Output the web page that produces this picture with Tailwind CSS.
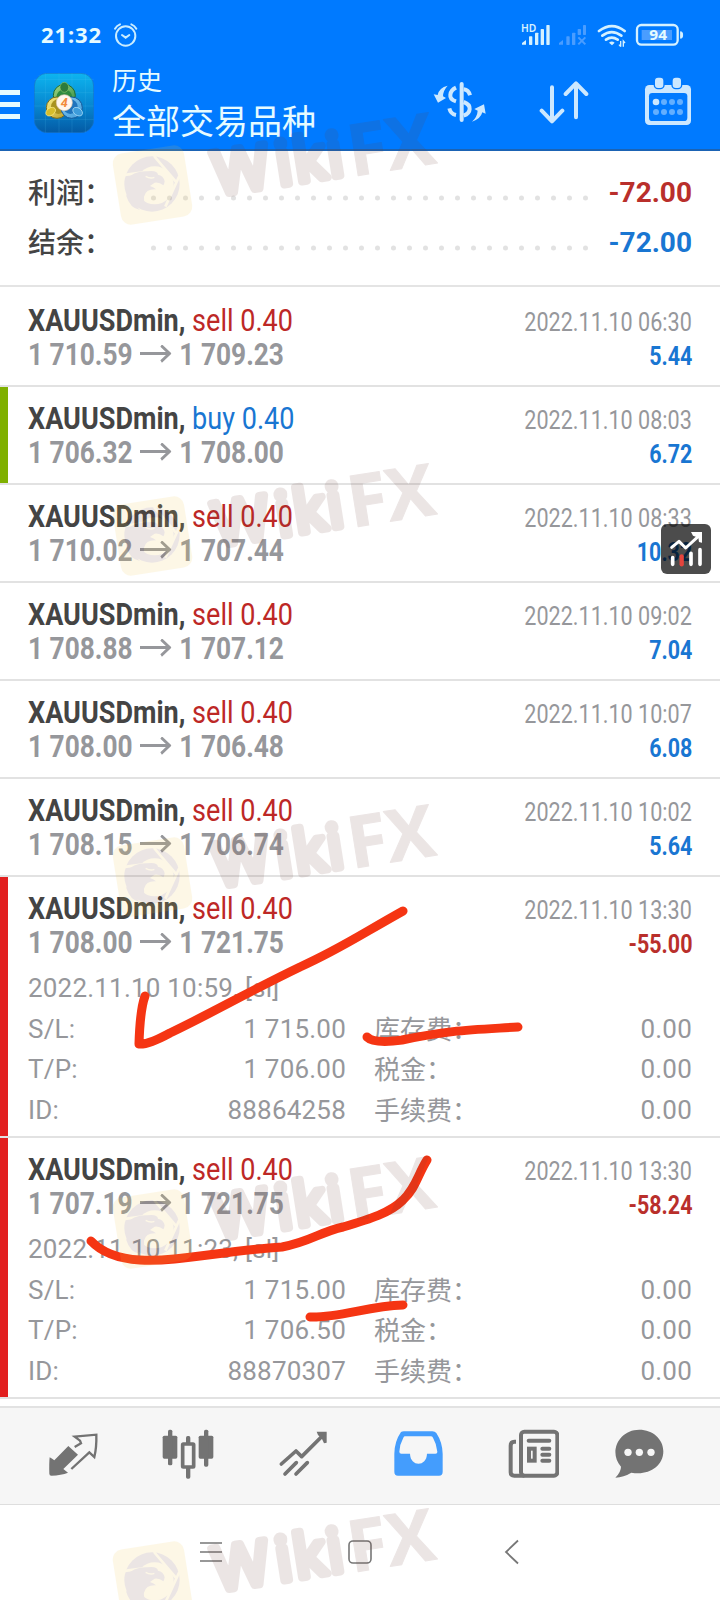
<!DOCTYPE html>
<html lang="zh-CN">
<head>
<meta charset="utf-8">
<title>历史</title>
<script src="https://cdn.jsdelivr.net/npm/@tailwindcss/browser@4"></script>
</head>
<body class="bg-white">
<div class="relative flex h-[1600px] w-[720px] flex-col overflow-hidden bg-white font-['Roboto','Noto_Sans_CJK_SC',sans-serif] text-[#96979b]">

  <header class="flex h-[151px] shrink-0 flex-col border-b-2 border-[#1b63b4] bg-[#007aff] text-[#e6fbff]">
    <div class="flex h-[66px] items-start pt-[20px] pl-[41px]">
      <div class="-mt-px mb-px w-[72px] text-[22px] leading-[30px] font-bold tracking-[0.9px] whitespace-nowrap font-['Noto_Sans',sans-serif]">21:32</div>
      <svg class="mt-[3px] h-[24px] w-[26px]" viewBox="339 69 78 72" fill="none" stroke="#c9ecff" stroke-width="6" stroke-linecap="round"><circle cx="377" cy="108" r="29"/><path d="M366 105l11 8 11-8M345 86q5-9 15-13M409 86q-5-9-15-13"/></svg>
      <svg class="mt-[2px] ml-[381px] h-[26px] w-[165px]" viewBox="480 66 495 78">
        <text x="483" y="96" font-family="Noto Sans" font-weight="600" font-size="31" textLength="46" lengthAdjust="spacingAndGlyphs" fill="#d5f1ff">HD</text>
        <g fill="#d5f1ff"><path d="M486 134v-5l12-9v14z"/><rect x="507" y="109" width="10" height="26" rx="2"/><rect x="525" y="98" width="10" height="37" rx="2"/><rect x="542" y="87" width="10" height="48" rx="2"/><rect x="559" y="75" width="10" height="60" rx="2"/></g>
        <g fill="#4a9dff"><path d="M597 134v-5l12-9v14z"/><rect x="619" y="109" width="10" height="26" rx="2"/><rect x="636" y="98" width="10" height="37" rx="2"/><rect x="653" y="87" width="10" height="18" rx="2"/><rect x="669" y="75" width="9" height="30" rx="2"/><path d="M655 112l21 21M676 112l-21 21" stroke="#4a9dff" stroke-width="6"/></g>
        <g fill="none" stroke="#d5f1ff" stroke-width="8" stroke-linecap="round"><path d="M717 93q39-29 77 0M727 107q28-21 57 0M738 119q17-12 35 0"/></g>
        <path d="M747 128q8-7 17 0l-8 8z" fill="#d5f1ff"/><path d="M782 123v17M777 134l5 6M790 140v-17l5 6" stroke="#d5f1ff" stroke-width="4" fill="none"/>
        <rect x="831" y="75" width="122" height="59" rx="13" fill="none" stroke="#d5f1ff" stroke-width="7"/><rect x="845" y="90" width="91" height="30" fill="#4a9dff"/><path d="M962 95q6 0 6 10t-6 10z" fill="#d5f1ff" stroke="#d5f1ff" stroke-width="3"/>
        <text x="868" y="120" font-family="Noto Sans" font-weight="700" font-size="44" textLength="53" lengthAdjust="spacingAndGlyphs" fill="#e6fbff">94</text>
      </svg>
    </div>
    <div class="flex">
      <div class="mt-[24px] flex w-[20px] flex-col gap-[7px]"><div class="h-[5px] bg-[#e6fbff]"></div><div class="h-[5px] bg-[#e6fbff]"></div><div class="h-[5px] bg-[#e6fbff]"></div></div>
      <svg class="mt-[7px] ml-[14px] size-[60px]" viewBox="102 219 180 180">
        <defs>
          <linearGradient id="tile" x1="0" y1="0" x2="0" y2="1"><stop offset="0" stop-color="#0db4ef"/><stop offset=".55" stop-color="#0786cf"/><stop offset="1" stop-color="#045aa4"/></linearGradient>
          <linearGradient id="gr" x1="0" y1="0" x2="1" y2="1"><stop offset="0" stop-color="#a5d884"/><stop offset="1" stop-color="#2b8a40"/></linearGradient>
          <linearGradient id="ye" x1="0" y1="0" x2="1" y2="1"><stop offset="0" stop-color="#fbf08a"/><stop offset="1" stop-color="#b79a22"/></linearGradient>
          <linearGradient id="bl" x1="0" y1="0" x2="1" y2="1"><stop offset="0" stop-color="#8accf0"/><stop offset="1" stop-color="#3f9cdc"/></linearGradient>
        </defs>
        <rect x="103" y="220" width="178" height="178" rx="38" fill="url(#tile)" stroke="#1a73c4" stroke-width="2"/>
        <path d="M136 220v178M177 220v178M216 220v178M256 220v178M103 238h178M103 278h178M103 318h178M103 358h178" stroke="#5cc8f0" stroke-opacity=".25" stroke-width="2"/>
        <circle cx="193" cy="286" r="33" fill="url(#gr)" stroke="#1d6a34" stroke-width="3"/><circle cx="193" cy="292" r="24" fill="#2f8a40"/><ellipse cx="193" cy="262" rx="13" ry="15" fill="#2d7b3c" stroke="#8bc66a" stroke-width="2"/>
        <circle cx="171" cy="323" r="32" fill="url(#ye)" stroke="#7c6d1b" stroke-width="3"/><circle cx="175" cy="320" r="22" fill="#a8921f"/><ellipse cx="152" cy="335" rx="16" ry="11" transform="rotate(-35 152 335)" fill="#d6bd2b" stroke="#fff08a" stroke-width="2"/>
        <circle cx="215" cy="323" r="32" fill="url(#bl)" stroke="#14589a" stroke-width="3"/><circle cx="211" cy="320" r="22" fill="#1f74bd"/><ellipse cx="233" cy="335" rx="16" ry="11" transform="rotate(35 233 335)" fill="#3d9cdb" stroke="#b8e6fb" stroke-width="2"/>
        <circle cx="193" cy="308" r="24" fill="#fff6ee" stroke="#dcc9b0" stroke-width="2"/>
        <text x="193" y="322" text-anchor="middle" font-family="Roboto" font-weight="700" font-style="italic" font-size="38" fill="#f28a3c">4</text>
      </svg>
      <div class="-mt-[2px] ml-[18px] flex w-[321px] flex-col whitespace-nowrap">
        <div class="text-[25px] leading-[30px] font-['Noto_Sans_CJK_SC',sans-serif]">历史</div>
        <div class="mt-[3px] text-[34px] leading-[46px] font-['Noto_Sans_CJK_SC',sans-serif]">全部交易品种</div>
      </div>
      <svg class="mt-[14px] h-[44px] w-[54px]" viewBox="220 240 162 132" fill="none" stroke="#cce8ff" stroke-width="12">
        <path d="M306 252v108" stroke-linecap="round"/><path d="M289 263q-15 7-17 21t17 20M269 325q4 17 20 20M312 268q15 2 19 18M312 306q19 7 18 21t-18 20"/>
        <path d="M264 257q-26 6-30 28l-12-2 13 25 24-14-9-5q0-17 14-32zM337 365q26-8 31-28l10 4-5-28-29 14 10 5q-1 18-17 33z" fill="#cce8ff" stroke="none"/>
      </svg>
      <svg class="mt-[14px] ml-[52px] h-[44px] w-[50px]" viewBox="537 240 150 132" fill="none" stroke="#cce8ff" stroke-width="12" stroke-linecap="round" stroke-linejoin="round"><path d="M576 262v101M545 332l31 32 31-32M648 352V251M617 282l31-32 31 32"/></svg>
      <svg class="mt-[11px] ml-[55px] h-[50px] w-[48px]" viewBox="852 231 144 150">
        <rect x="855" y="255" width="138" height="120" rx="13" fill="#cce8ff"/><rect x="867" y="279" width="115" height="84" rx="10" fill="#007aff"/>
        <rect x="883" y="231" width="29" height="35" rx="11" fill="#cce8ff" stroke="#007aff" stroke-width="4"/><rect x="936" y="231" width="29" height="35" rx="11" fill="#cce8ff" stroke="#007aff" stroke-width="4"/>
        <circle cx="888" cy="306" r="10" fill="#cce8ff"/><g fill="#63afff"><circle cx="912" cy="306" r="9"/><circle cx="936" cy="306" r="9"/><circle cx="960" cy="306" r="9"/><circle cx="888" cy="336" r="9"/><circle cx="912" cy="336" r="9"/><circle cx="936" cy="336" r="9"/><circle cx="960" cy="336" r="9"/></g>
      </svg>
    </div>
  </header>

  <section class="mb-[2px] flex h-[136px] shrink-0 flex-col border-b-2 border-[#e4e4e4] pt-[15px] pr-[28px] pl-[28px] text-[28px] leading-[50px] font-bold">
    <div class="flex h-[50px]">
      <div class="w-[121px] font-medium text-[#444] font-['Noto_Sans_CJK_SC',sans-serif]">利润：</div>
      <svg class="mt-[29px] h-[6px] w-[442px]"><path d="M4.500 3H440" stroke="#e2e2e2" stroke-width="5" stroke-linecap="round" stroke-dasharray="0 16"/></svg>
      <div class="flex-1 pt-[2px] text-right text-[#b92f2b]">-72.00</div>
    </div>
    <div class="flex h-[50px]">
      <div class="w-[121px] font-medium text-[#444] font-['Noto_Sans_CJK_SC',sans-serif]">结余：</div>
      <svg class="mt-[29px] h-[6px] w-[442px]"><path d="M4.500 3H440" stroke="#e2e2e2" stroke-width="5" stroke-linecap="round" stroke-dasharray="0 16"/></svg>
      <div class="flex-1 pt-[2px] text-right text-[#1976d2]">-72.00</div>
    </div>
  </section>

  <main id="deals" class="flex h-[1117px] shrink-0 flex-col"></main>

  <nav class="flex h-[99px] shrink-0 gap-[63px] border-t-2 border-b border-t-[#e2e2e2] border-b-[#dedede] bg-[#f6f6f6] pt-[20px] pl-[47px]">
    <svg class="size-[52px] shrink-0" viewBox="142 115 156 156"><path d="M150 203q8 5 14 9l42-43 29 26-44 43 14 11q-20 8-50 9-6 0-6-6-1-32 1-49z" fill="#737373"/><path d="M225 172l19-11-3-8-16-12 65-6q1 38-6 67l-15-14-54 50" fill="none" stroke="#737373" stroke-width="7"/></svg>
    <svg class="size-[52px] shrink-0" viewBox="487 115 156 156" fill="#737373"><rect x="489" y="138" width="44" height="69" rx="5"/><rect x="505" y="120" width="13" height="107" rx="5"/><rect x="597" y="138" width="44" height="69" rx="5"/><rect x="613" y="120" width="13" height="111" rx="5"/><rect x="559" y="139" width="13" height="128" rx="5"/><rect x="549" y="163" width="33" height="69" rx="2" fill="#f6f6f6" stroke="#737373" stroke-width="11"/></svg>
    <svg class="size-[52px] shrink-0" viewBox="831 115 156 156" fill="none" stroke="#737373" stroke-width="11" stroke-linecap="round" stroke-linejoin="round"><path d="M844 223l44-39 17 17 68-68M855 253l34-34M888 253l34-34"/><path d="M950 126h30v33l-8 2-6-13-12-12z" fill="#737373" stroke="none"/></svg>
    <svg class="size-[52px] shrink-0" viewBox="96 115 156 156"><path d="M123 127q3-2 9-2h85q8 0 12 5 18 27 19 62v54q0 12-11 12H114q-11 0-11-12v-54q1-38 20-65zm12 13q-3 0-5 4-11 20-12 42 0 6 6 6h26c1 40 50 40 51 0h25q7 0 6-6-2-23-13-42-2-4-7-4z" fill="#449dfd" fill-rule="evenodd"/></svg>
    <svg class="size-[52px] shrink-0" viewBox="440 115 156 156" fill="none" stroke="#737373" stroke-width="12"><rect x="482" y="126" width="109" height="132" rx="10"/><path d="M467 156h-5q-11 0-11 12v80q0 10 11 10h30"/><path d="M505 153h62M546 177h21M546 195h21M546 213h21" stroke-linecap="round"/><rect x="506" y="177" width="17" height="36"/></svg>
    <svg class="-ml-[8px] size-[52px] shrink-0" viewBox="761 115 156 156"><path d="M837 120c40 0 72 28 72 65 0 46-46 74-96 64q-23 14-48 15 17-17 17-33c-38-42-8-111 55-111z" fill="#737373"/><g fill="#f6f6f6"><circle cx="803" cy="188" r="11"/><circle cx="837" cy="188" r="11"/><circle cx="872" cy="188" r="11"/></g></svg>
  </nav>

  <div class="flex h-[95px] items-start pt-[34px] pl-[200px]">
    <svg class="h-[26px] w-[22px]" viewBox="0 0 22 26" stroke="#777" stroke-width="1.600"><path d="M0 4h22M0 13h22M0 22h22"/></svg>
    <svg class="ml-[125px] h-[26px] w-[26px]" viewBox="0 0 26 26" fill="none" stroke="#777" stroke-width="1.600"><rect x="2" y="2" width="22" height="22" rx="4"/></svg>
    <svg class="ml-[131px] h-[26px] w-[16px]" viewBox="0 0 16 26" fill="none" stroke="#777" stroke-width="1.800"><path d="M14 1.500L2 13l12 11.500"/></svg>
  </div>

  <div class="absolute top-[524px] left-[661px] size-[50px] rounded-[6px] bg-black/70">
    <svg class="size-full" viewBox="484 132 150 150" fill="none" stroke="#fff" stroke-width="11" stroke-linecap="round" stroke-linejoin="round"><path d="M516 202l22-18 20 20 38-35" stroke-width="9"/><path d="M574 156h33v32l-9-2-2-13-16-6z" fill="#fff" stroke="none"/><path d="M519 233v20M574 220v33M601 209v44"/><path d="M546 229v24" stroke="#e5443d" stroke-width="13"/></svg>
  </div>

  <svg class="pointer-events-none absolute top-0 left-0 h-[1600px] w-[720px]" viewBox="0 0 720 1600">
    <g fill="none" stroke="#f53513" stroke-width="9" stroke-linecap="round" stroke-linejoin="round">
      <path d="M145 996Q140 1010 139 1044Q148 1045 170 1033C210 1014 250 991 300 967C340 949 360 935 403 911"/>
      <path d="M367 1037Q374 1044 402 1040C450 1030 470 1030 518 1027"/>
      <path d="M91 1241Q107 1258 140 1260C180 1262 220 1251 282 1247C310 1242 320 1232 343 1227C370 1219 390 1213 403 1200C416 1188 418 1174 427 1160"/>
      <path d="M310 1317C340 1318 368 1306 403 1305"/>
    </g>
    <defs>
      <g id="mark" opacity=".13">
        <rect x="116.500" y="149" width="72" height="72" rx="10" transform="rotate(-9 152.500 185)" fill="#f2c849"/>
        <g transform="translate(0 130) scale(.33333)">
          <circle cx="456" cy="162" r="83" fill="#6e3f3a"/>
          <circle cx="464" cy="166" r="57" fill="#f2c849"/>
          <path d="M462 78l68 80M538 138l-42 92M364 136l104-14" stroke="#f2c849" stroke-width="8"/>
          <path d="M374 152q28-30 68-28 30-4 32 10 16 2 20 20-1 8-4 12-12-10-26-8l-14 10q12 4 18 10-30-2-36 22-4 26 30 38-44-2-52-34-6 22 10 36-30-4-42-44 6 0 10 4-14-24-14-48z" fill="#6e3f3a"/>
          <path d="M437 139q14 8 26 3" stroke="#f2c849" stroke-width="4" fill="none"/>
        </g>
        <g fill="#6e3f3a" stroke="#6e3f3a" stroke-linejoin="round" transform="translate(217 195) rotate(-9)">
          <text x="0 63 81 115" y="0" font-family="Open Sans" font-weight="400" font-size="60" stroke-width="8">Wiki</text>
          <text x="136 175" y="3" font-family="Open Sans" font-weight="700" font-size="72" stroke-width="1">FX</text>
        </g>
      </g>
    </defs>
    <use href="#mark"/><use href="#mark" y="351"/><use href="#mark" y="692"/><use href="#mark" y="1044"/><use href="#mark" y="1396"/>
  </svg>
</div>

<script>
const deals = [
  ['sell', '1 710.59', '1 709.23', '06:30', '5.44', ''],
  ['buy', '1 706.32', '1 708.00', '08:03', '6.72', 'bg-[#7fb000]'],
  ['sell', '1 710.02', '1 707.44', '08:33', '10.32', ''],
  ['sell', '1 708.88', '1 707.12', '09:02', '7.04', ''],
  ['sell', '1 708.00', '1 706.48', '10:07', '6.08', ''],
  ['sell', '1 708.15', '1 706.74', '10:02', '5.64', ''],
  ['sell', '1 708.00', '1 721.75', '13:30', '-55.00', 'bg-[#e21f1f]', ['10:59', '1 706.00', '88864258']],
  ['sell', '1 707.19', '1 721.75', '13:30', '-58.24', 'bg-[#e21f1f]', ['11:23', '1 706.50', '88870307']],
];
const line = (a, b, c) => `
  <div class="flex h-[40.500px]"><div class="w-[100px]">${a}</div><div class="w-[218px] text-right">${b}</div><div class="-mt-px w-[150px] pl-[28px] tracking-normal font-['Noto_Sans_CJK_SC',sans-serif]">${c}</div><div class="flex-1 text-right">0.00</div></div>`;
document.getElementById('deals').innerHTML = deals.map(([side, from, to, time, profit, bar, more]) => `
  <article class="flex border-b-2 border-[#e2e2e2] ${more ? 'h-[261px]' : 'h-[98px]'}">
    <div class="w-[8px] shrink-0 ${bar}"></div>
    <div class="flex flex-1 flex-col pt-[14px] pr-[28px] pl-[20px]">
      <div class="flex h-[68px] justify-between leading-[34px] whitespace-nowrap">
        <div class="w-[300px]">
          <div class="w-max origin-left scale-x-[.845] text-[32px] font-bold text-[#444]">XAUUSDmin, <span class="font-normal ${side === 'buy' ? 'text-[#1976d2]' : 'text-[#bd2826]'}">${side} 0.40</span></div>
          <div class="mt-px flex w-max origin-left scale-x-[.848] items-center text-[31px] font-bold">${from}<svg class="mx-[9px] h-[20px] w-[37px]" viewBox="0 0 37 20" fill="none" stroke="#96979b" stroke-width="3"><path d="M0 8.500H35M25 .5L35 8.500L25 16.500"/></svg>${to}</div>
        </div>
        <div class="flex flex-col items-end pt-[2px] text-[26px]">
          <div class="w-max origin-right scale-x-[.83]">2022.11.10 ${time}</div>
          <div class="w-max origin-right scale-x-[.825] font-bold ${profit[0] === '-' ? 'text-[#b92f2b]' : 'text-[#1976d2]'}">${profit}</div>
        </div>
      </div>
      ${more ? `<div class="mt-[9px] text-[26px] leading-[40.500px] tracking-[0.2px] whitespace-nowrap">
        <div>2022.11.10 ${more[0]}, [sl]</div>
        ${line('S/L:', '1 715.00', '库存费：')}${line('T/P:', more[1], '税金：')}${line('ID:', more[2], '手续费：')}
      </div>` : ''}
    </div>
  </article>`).join('');
</script>
</body>
</html>
